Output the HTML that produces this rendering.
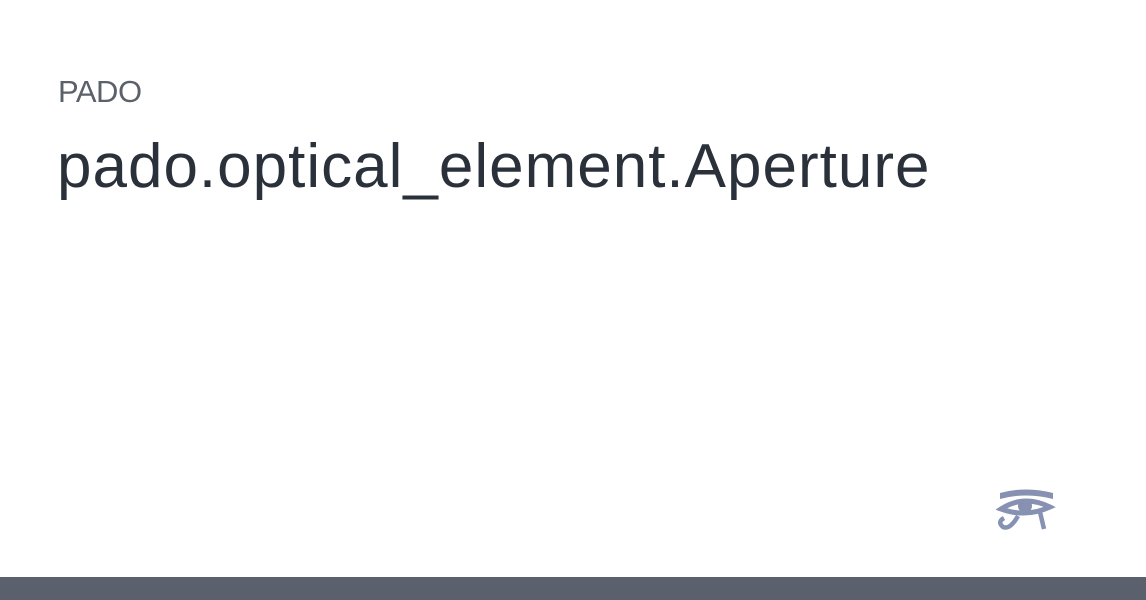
<!DOCTYPE html>
<html><head><style>
body{margin:0;width:1146px;height:600px;background:#fff;position:relative;overflow:hidden;font-family:"Liberation Sans",sans-serif}
.s{position:absolute;left:58px;top:74px;font-size:31px;color:#5b616b;letter-spacing:-0.5px}
.t{position:absolute;left:57px;top:131px;font-size:62px;color:#2a313b;letter-spacing:1px;white-space:nowrap}
.bar{position:absolute;left:0;bottom:0;width:1146px;height:23px;background:#5a616c}
</style></head><body>
<div class="s">PADO</div>
<div class="t">pado.optical_element.Aperture</div>
<svg style="position:absolute;left:996px;top:488px" width="60" height="46" viewBox="0 0 60 46">
<g fill="#8791b1" stroke="#8791b1">
<path d="M4 5 Q30 -2 57 5 L57 11 Q30 4 4 11Z" stroke="none"/>
<path d="M5 21 Q28 6 54 19 Q30 30 5 21Z" fill="none" stroke-width="5"/>
<circle cx="29" cy="18" r="7" stroke="none"/>
<path d="M22 28 Q14 42 7 39 Q1 34 8 30" fill="none" stroke-width="4.5"/>
<path d="M44 24 L48 41" fill="none" stroke-width="4.5"/>
</g></svg>
<div class="bar"></div>
</body></html>
